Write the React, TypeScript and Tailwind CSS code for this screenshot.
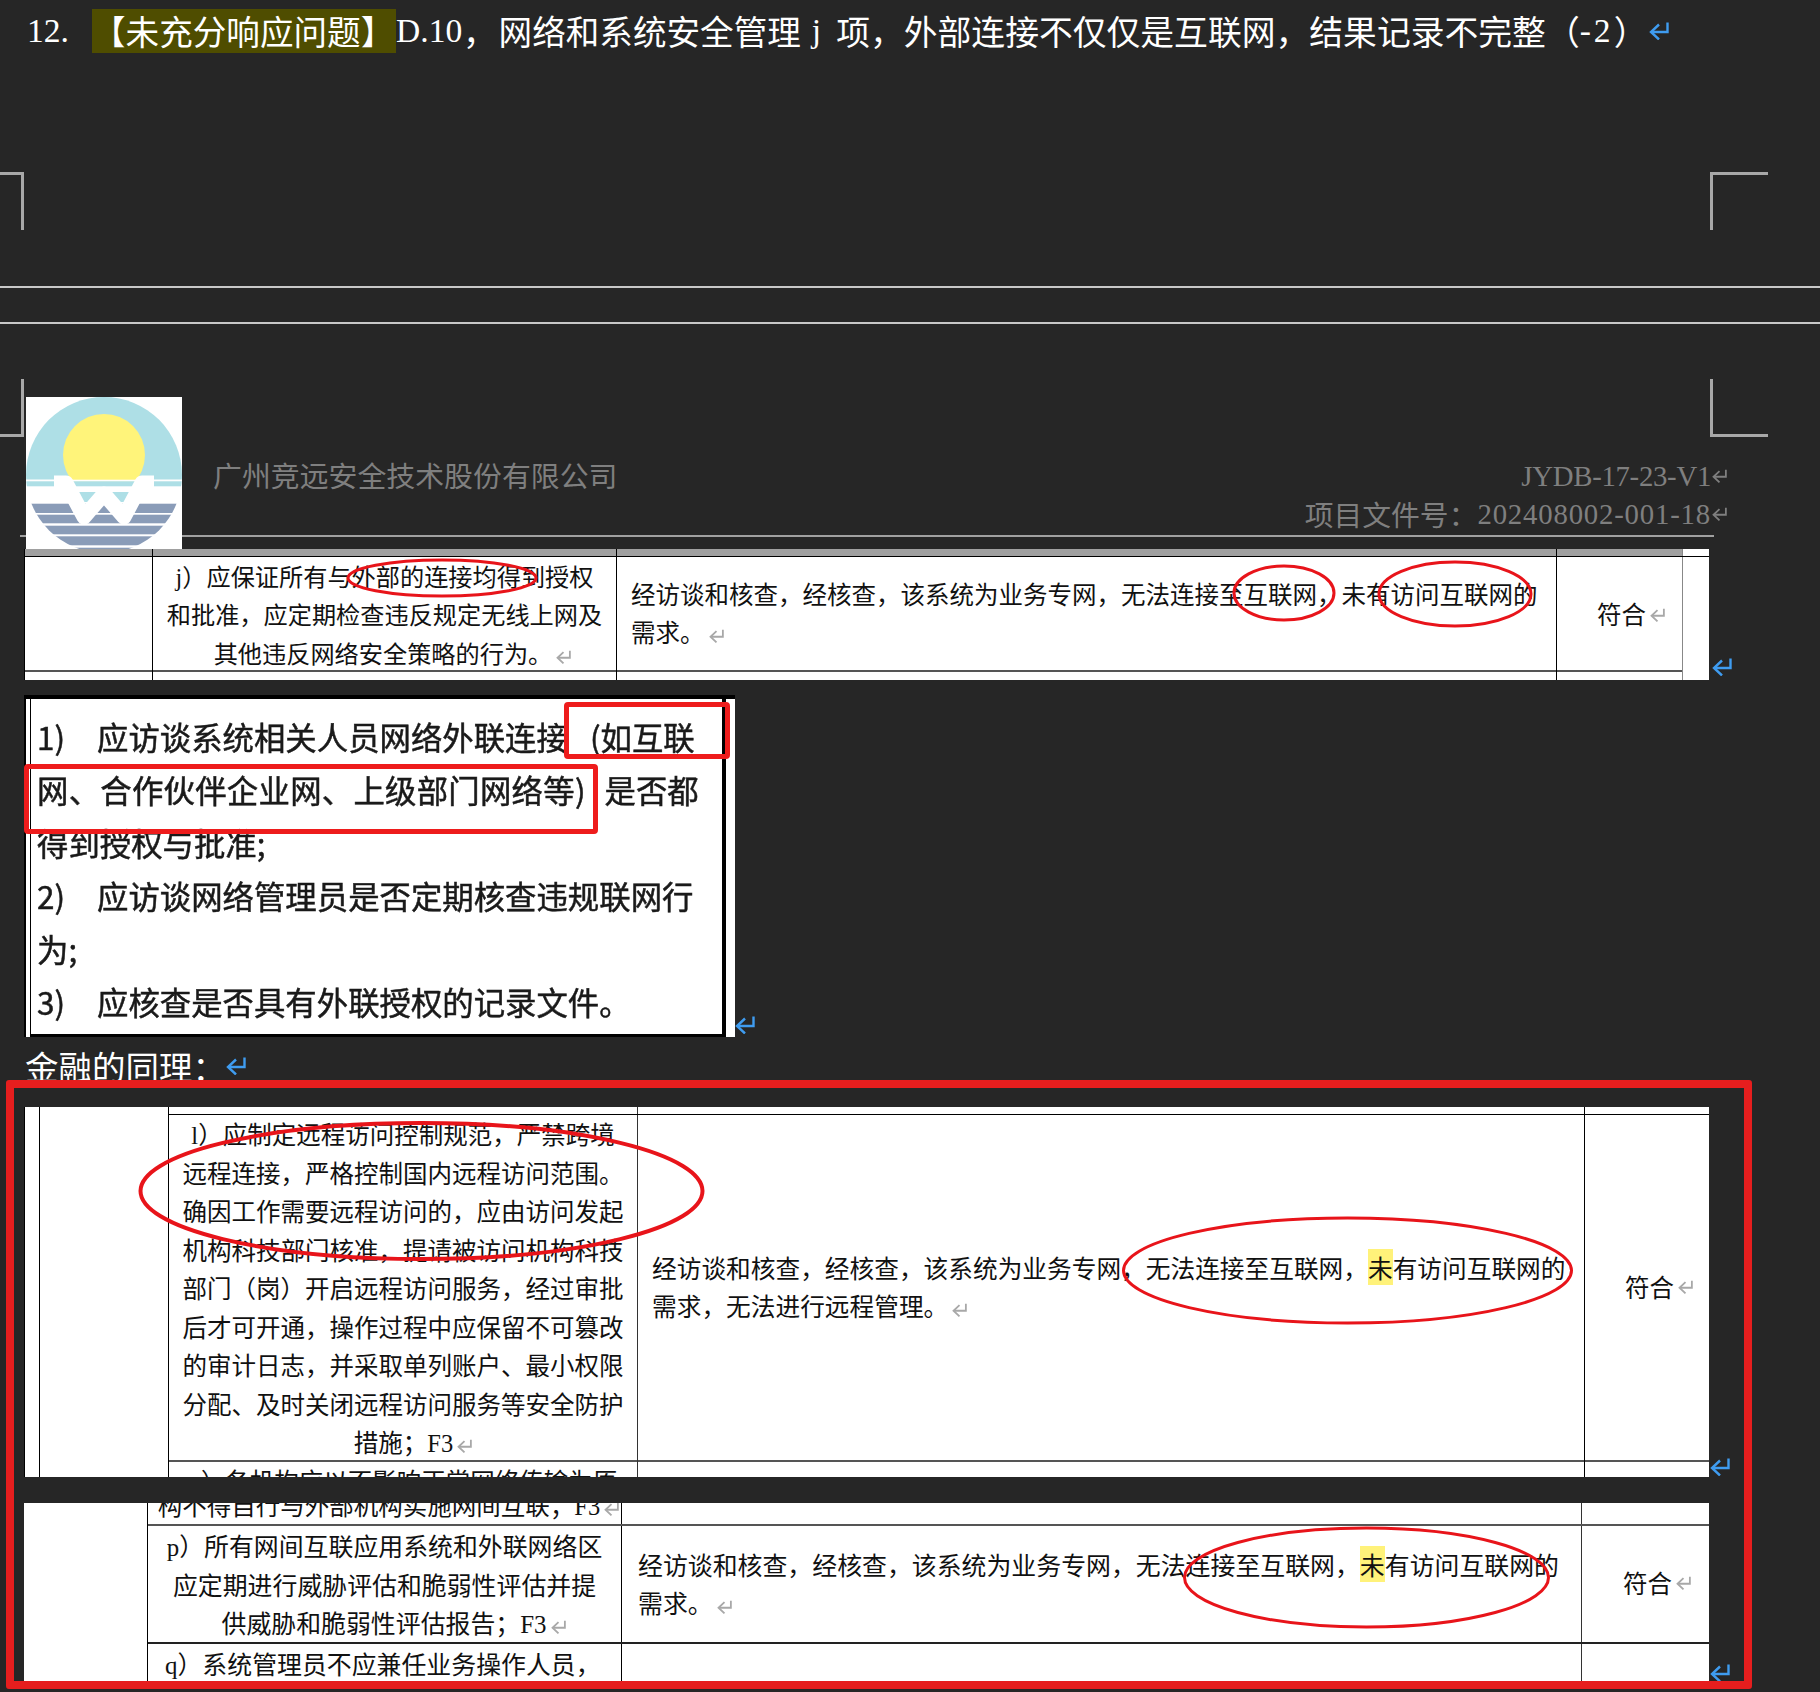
import type { ReactNode } from "react";

const CJK = "font-['Noto_Sans_CJK_SC',sans-serif]";

const fullLine =
  "经访谈和核查，经核查，该系统为业务专网，无法连接至互联网，";

// latin runs: Times digits are exactly half a CJK cell, like the SimSun original
const M = ({ className = "", children }: { className?: string; children: ReactNode }) => (
  <span className={`font-['Liberation_Serif',serif] leading-none ${className}`}>{children}</span>
);

const Ret = ({ className }: { className: string }) => (
  <svg viewBox="0 0 20 18" fill="none" stroke="currentColor" strokeWidth="2.4" className={className}>
    <path d="M18.5 0.5V10H3" />
    <path d="M10 2.5L2 10l8 7.5" />
  </svg>
);

const BlueRet = ({ className = "" }: { className?: string }) => (
  <Ret className={`w-[20px] h-[18px] shrink-0 text-[#3f9cf0] ${className}`} />
);

const GrayRet = () => (
  <Ret className="inline-block w-[15px] h-[14px] ml-[4px] text-[#a8a8a8] align-[-1px]" />
);

const Corner = ({ className }: { className: string }) => <div className={`h-[58px] border-[#a8a8a8] ${className}`} />;

const Logo = () => (
  <svg viewBox="0 0 156 152" className="relative z-10 w-[156px] h-[152px] shrink-0 bg-white">
    <defs>
      <clipPath id="disc">
        <circle cx="78" cy="78" r="78" />
      </clipPath>
      <clipPath id="sky">
        <rect x="0" y="0" width="156" height="84.3" />
      </clipPath>
    </defs>
    <g clipPath="url(#disc)">
      <rect x="0" y="0" width="156" height="82.7" fill="#aedfe6" />
      <circle cx="78" cy="58" r="41" fill="#fff47a" clipPath="url(#sky)" />
      <rect x="0" y="82.7" width="156" height="1.6" fill="#ffffff" />
      <rect x="0" y="84.3" width="156" height="5" fill="#aedfe6" />
      <rect x="44" y="95" width="68" height="10" fill="#aedfe6" />
      <rect x="0" y="106.7" width="156" height="9.3" fill="#8a9cb8" />
      <rect x="0" y="117.7" width="156" height="8.6" fill="#8a9cb8" />
      <rect x="0" y="128.7" width="156" height="8.6" fill="#8a9cb8" />
      <rect x="0" y="139.3" width="156" height="9" fill="#8a9cb8" />
      <rect x="0" y="150.7" width="156" height="2" fill="#8a9cb8" />
    </g>
    <path d="M28 86H40L58 120L78 97L98 120L116 86H128" fill="none" stroke="#ffffff" strokeWidth="15" strokeLinejoin="round" />
  </svg>
);

const Centered = ({ lines, size, lh = "leading-[38.5px]" }: { lines: ReactNode[]; size: string; lh?: string }) => (
  <div className={`w-full text-center whitespace-nowrap text-[#111] ${size} ${lh}`}>
    {lines.map((l, i) => (
      <div key={i}>{l}</div>
    ))}
  </div>
);

const Mark = ({ children }: { children: ReactNode }) => (
  <span className="bg-[#fff27a] [box-decoration-break:clone]">{children}</span>
);

const shotLines = [
  { no: "1)", parts: <>应访谈系统相关人员网络外联连接<span className="ml-[22px]">(如互联</span></> },
  { no: "", parts: <><span className="tracking-[0.25px]">网、合作伙伴企业网、上级部门网络等</span><span className="mr-[19px]">)</span>是否都</> },
  { no: "", parts: <>得到授权与批准;</> },
  { no: "2)", parts: <>应访谈网络管理员是否定期核查违规联网行</> },
  { no: "", parts: <>为;</> },
  { no: "3)", parts: <>应核查是否具有外联授权的记录文件。</> },
];

export default function App() {
  return (
    <div className={`relative w-[1820px] h-[1692px] overflow-hidden bg-[#262626] ${CJK}`}>
      {/* question heading */}
      <div className="flex items-center h-[44px] mt-[9px] pl-[27px] text-[33.6px] leading-[44px] text-white whitespace-nowrap">
        <M className="w-[50px]">12.</M>
        <span className="ml-[15px] bg-[#4f4d00] w-[304px]">【未充分响应问题】</span>
        <M className="w-[67px]">D.10</M>
        <span>，</span>
        <span className="ml-[2px]">网络和系统安全管理</span>
        <M className="ml-[11px] mr-[15px]">j</M>
        <span className="text-[33.8px]">项，外部连接不仅仅是互联网，结果记录不完整（</span>
        <M className="tracking-[3px]">-2</M>
        <span>）</span>
        <BlueRet className="ml-[2px]" />
      </div>

      {/* page break marks */}
      <div className="flex justify-between mt-[119px] pr-[52px]">
        <Corner className="w-[24px] border-t-[3px] border-r-[3px]" />
        <Corner className="w-[58px] border-t-[3px] border-l-[3px]" />
      </div>
      <div className="mt-[56px] h-[2px] bg-[#c8c8c8]" />
      <div className="mt-[34px] h-[2px] bg-[#c8c8c8]" />
      <div className="flex justify-between mt-[55px] pr-[52px]">
        <Corner className="w-[24px] border-b-[3px] border-r-[3px]" />
        <Corner className="w-[58px] border-b-[3px] border-l-[3px]" />
      </div>

      {/* document header */}
      <div className="flex items-end justify-between ml-[20px] w-[1694px] h-[140px] -mt-[40px] border-b-2 border-[#a0a0a0]">
        <div className="flex items-end">
          <div className="ml-[6px] -mb-[14px]">
            <Logo />
          </div>
          <div className="ml-[31px] mb-[42px] text-[28.9px] leading-[38px] text-[#7f7f7f] whitespace-nowrap">广州竞远安全技术股份有限公司</div>
        </div>
        <div className="-mr-[13px] mb-[2px] text-right text-[28.8px] leading-[38px] text-[#7f7f7f] whitespace-nowrap">
          <div className="flex items-center justify-end h-[38px]">
            <M className="-tracking-[0.3px]">JYDB-17-23-V1</M>
            <Ret className="w-[15px] h-[14px] ml-[1px] text-[#7f7f7f]" />
          </div>
          <div className="flex items-center justify-end h-[38px]">
            项目文件号：<M className="tracking-[0.8px]">202408002-001-18</M>
            <Ret className="w-[15px] h-[14px] ml-[1px] text-[#7f7f7f]" />
          </div>
        </div>
      </div>

      {/* first table */}
      <div className="flex items-end mt-[12px] ml-[24px]">
        <div className="w-[1685px] h-[131px] overflow-hidden bg-white text-[#111]">
          <div className="grid grid-cols-[129px_464px_940px_126px] h-[8px] border-b border-black">
            <div className="bg-[#a0a0a0] border-l border-r border-black" />
            <div className="bg-[#a0a0a0] border-r border-black" />
            <div className="bg-[#a0a0a0] border-r border-black" />
            <div className="bg-[#a0a0a0] border-r border-[#888]" />
          </div>
          <div className="grid grid-cols-[129px_464px_940px_126px] h-[115px] border-b-2 border-[#555] w-[1659px]">
            <div className="border-l border-r border-black" />
            <div className="flex items-center border-r border-black">
              <Centered
                size="text-[24.2px]"
                lh="leading-[38.4px]"
                lines={[
                  <><M>j</M>）应保证所有与外部的连接均得到授权</>,
                  "和批准，应定期检查违反规定无线上网及",
                  <span className="ml-[16px]">其他违反网络安全策略的行为。<GrayRet /></span>,
                ]}
              />
            </div>
            <div className="flex items-center pl-[14px] pb-[4px] border-r border-black text-[24.5px] leading-[38px] whitespace-nowrap">
              <div>
                <div>{fullLine}未有访问互联网的</div>
                <div>需求。<GrayRet /></div>
              </div>
            </div>
            <div className="flex items-center pl-[40px] border-r border-[#888] text-[24.5px]">符合<GrayRet /></div>
          </div>
          <div className="grid grid-cols-[129px_464px_940px_126px] h-[8px]">
            <div className="border-l border-r border-black" />
            <div className="border-r border-black" />
            <div className="border-r border-black" />
            <div className="border-r border-[#888]" />
          </div>
        </div>
        <BlueRet className="ml-[3px] mb-[4px]" />
      </div>

      {/* pasted requirement screenshot */}
      <div className="flex items-end mt-[15px] ml-[24px]">
        <div className="w-[711px] h-[342px] pl-[4px] pr-[9px] bg-white border-l-2 border-t-4 border-black">
          <div className="h-full pl-[6px] pt-[11px] border-l border-r-4 border-b-[3px] border-black text-[31.4px] leading-[53px] text-[#1a1a1a] whitespace-nowrap blur-[0.6px] [-webkit-text-stroke:0.5px_#1a1a1a]">
            {shotLines.map((l, i) => (
              <div key={i} className="flex">
                {l.no && <span className="w-[60px]">{l.no}</span>}
                <span>{l.parts}</span>
              </div>
            ))}
          </div>
        </div>
        <BlueRet className="mb-[3px]" />
      </div>

      <div className="flex items-center mt-[8px] ml-[25px] h-[42px] text-[33.5px] leading-[42px] text-white">
        金融的同理：
        <BlueRet />
      </div>

      {/* finance standard, first fragment */}
      <div className="flex items-end mt-[20px] ml-[24px]">
        <div className="flex w-[1685px] h-[370px] overflow-hidden bg-white text-[#111]">
          <div className="w-[16px] border-l border-r border-black" />
          <div className="w-[129px] border-r border-black" />
          <div className="flex-1">
            <div className="grid grid-cols-[469px_947px_1fr] h-[8px] border-b border-black">
              <div className="border-r border-[#333]" />
              <div className="border-r border-black" />
              <div />
            </div>
            <div className="grid grid-cols-[469px_947px_1fr] h-[347px] border-b-2 border-[#555]">
              <div className="flex items-center border-r border-[#333]">
                <Centered
                  size="text-[24.5px]"
                  lines={[
                    <><M>l</M>）应制定远程访问控制规范，严禁跨境</>,
                    "远程连接，严格控制国内远程访问范围。",
                    "确因工作需要远程访问的，应由访问发起",
                    "机构科技部门核准，提请被访问机构科技",
                    "部门（岗）开启远程访问服务，经过审批",
                    "后才可开通，操作过程中应保留不可篡改",
                    "的审计日志，并采取单列账户、最小权限",
                    "分配、及时关闭远程访问服务等安全防护",
                    <span className="ml-[20px]">措施；<M>F3</M><GrayRet /></span>,
                  ]}
                />
              </div>
              <div className="flex items-center pl-[14px] pb-[4px] border-r border-black text-[24.7px] leading-[38.5px] whitespace-nowrap">
                <div>
                  <div>{fullLine}<Mark>未</Mark>有访问互联网的</div>
                  <div>需求，无法进行远程管理。<GrayRet /></div>
                </div>
              </div>
              <div className="flex items-center pl-[40px] pb-[2px] text-[24.5px]">符合<GrayRet /></div>
            </div>
            <div className="grid grid-cols-[469px_947px_1fr] h-[15px]">
              <div className="overflow-hidden border-r border-[#333] text-center text-[24.5px] leading-[38px] whitespace-nowrap">
                <M>o</M>）各机构应以不影响正常网络传输为原
              </div>
              <div className="border-r border-black" />
              <div />
            </div>
          </div>
        </div>
        <BlueRet className="ml-[1px] mb-[1px]" />
      </div>

      {/* finance standard, second fragment */}
      <div className="flex items-end mt-[26px] ml-[24px]">
        <div className="flex w-[1685px] h-[181px] overflow-hidden bg-white text-[#111]">
          <div className="w-[124px] border-r border-black" />
          <div className="flex-1">
            <div className="grid grid-cols-[474px_960px_1fr] h-[23px] border-b-2 border-[#555]">
              <div className="flex items-end justify-center pl-[8px] overflow-hidden border-r border-black text-[24.5px] leading-[38px] whitespace-nowrap">
                <div className="shrink-0">构不得自行与外部机构实施网间互联；<M>F3</M><GrayRet /></div>
              </div>
              <div className="border-r border-[#333]" />
              <div />
            </div>
            <div className="grid grid-cols-[474px_960px_1fr] h-[118px] border-b-2 border-[#222]">
              <div className="flex items-center border-r border-black">
                <Centered
                  size="text-[24.9px]"
                  lines={[
                    <><M>p</M>）所有网间互联应用系统和外联网络区</>,
                    "应定期进行威胁评估和脆弱性评估并提",
                    <span className="ml-[18px]">供威胁和脆弱性评估报告；<M>F3</M><GrayRet /></span>,
                  ]}
                />
              </div>
              <div className="flex items-center pl-[16px] pb-[2px] border-r border-[#333] text-[24.9px] leading-[38.5px] whitespace-nowrap">
                <div>
                  <div>{fullLine}<Mark>未</Mark>有访问互联网的</div>
                  <div>需求。<GrayRet /></div>
                </div>
              </div>
              <div className="flex items-center pl-[41px] pb-[2px] text-[24.5px]">符合<GrayRet /></div>
            </div>
            <div className="grid grid-cols-[474px_960px_1fr] h-[40px]">
              <div className="pl-[17px] border-r border-black text-[24.9px] leading-[38px] whitespace-nowrap">
                <M>q</M>）系统管理员不应兼任业务操作人员，
              </div>
              <div className="border-r border-[#333]" />
              <div />
            </div>
          </div>
        </div>
        <BlueRet className="ml-[1px] mb-[2px]" />
      </div>

      {/* red annotations on top of everything */}
      <div className="absolute left-[564px] top-[702px] w-[166px] h-[57px] border-[5px] border-[#ee1c1c] rounded-[4px]" />
      <div className="absolute left-[24px] top-[764px] w-[574px] h-[70px] border-[5px] border-[#ee1c1c] rounded-[4px]" />
      <div className="absolute left-[6px] top-[1080px] w-[1746px] h-[609px] border-[8px] border-[#e61e1e] rounded-[3px]" />
      <svg viewBox="0 0 1820 1692" fill="none" stroke="#e8141a" strokeWidth="3" className="absolute inset-0 w-[1820px] h-[1692px]">
        <ellipse cx="442" cy="578" rx="94" ry="18" />
        <ellipse cx="1284" cy="593" rx="50" ry="27" />
        <ellipse cx="1455" cy="594" rx="76" ry="32" />
        <ellipse cx="421.5" cy="1191" rx="281" ry="68" strokeWidth="4" />
        <ellipse cx="1347.5" cy="1270.5" rx="224" ry="52.5" />
        <ellipse cx="1366.5" cy="1577.5" rx="182" ry="49.5" />
      </svg>
    </div>
  );
}
